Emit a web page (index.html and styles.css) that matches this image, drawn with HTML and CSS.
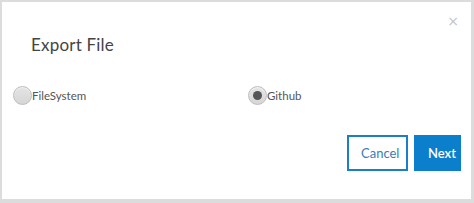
FILE: index.html
```html
<!DOCTYPE html>
<html lang="en">
<head>
    <meta charset="UTF-8">
    <title>Export File</title>
    <link rel="stylesheet" href="styles.css">
</head>
<body>
    <div class="modal">
        <div class="modal-header">
            <h3 class="modal-title">Export File</h3>
            <span class="close">&times;</span>
        </div>
        <div class="options">
            <label class="option">
                <span class="radio"></span>FileSystem
            </label>
            <label class="option">
                <span class="radio checked"></span>Github
            </label>
        </div>
        <div class="modal-footer">
            <button class="btn btn-cancel">Cancel</button>
            <button class="btn btn-next">Next</button>
        </div>
    </div>
</body>
</html>
```

FILE: styles.css
```css
body {
    margin: 0;
    padding: 2px 3px 4px 2px;
    background-color: #dcdcdc;
    font-family: 'Source Sans Pro', Lato, 'Open Sans', sans-serif;
}
.modal {
    background-color: #fff;
    height: 197px;
    box-sizing: border-box;
    position: relative;
}
.modal-header {
    padding: 32px 0 0 29px;
    height: 74px;
    box-sizing: border-box;
}
.modal-title {
    margin: 0;
    font-size: 17px;
    font-weight: normal;
    color: #444;
    letter-spacing: 0.2px;
}
.close {
    position: absolute;
    top: 11px;
    right: 12px;
    color: #c4c4c4;
    font-size: 14px;
    font-family: 'DejaVu Sans', sans-serif;
}
.options {
    display: grid;
    grid-template-columns: 235px 1fr;
    padding-left: 11px;
    padding-top: 10px;
}
.option {
    display: flex;
    align-items: center;
    font-size: 11.5px;
    color: #555;
}
.radio {
    width: 17px;
    height: 17px;
    border-radius: 50%;
    border: 1px solid #bdbdbd;
    background: linear-gradient(#e4e4e4, #d6d6d6);
    box-shadow: inset 0 1px 1px rgba(255,255,255,0.6);
    display: inline-flex;
    align-items: center;
    justify-content: center;
}
.radio.checked::after {
    content: "";
    width: 9px;
    height: 9px;
    border-radius: 50%;
    background-color: #555;
}
.modal-footer {
    display: flex;
    justify-content: flex-end;
    gap: 6px;
    padding: 30px 10px 0 0;
}
.btn {
    height: 36px;
    font-family: inherit;
    font-size: 13px;
    padding: 0 12px;
    border-radius: 0;
    cursor: pointer;
}
.btn-cancel {
    width: 61px;
    background-color: #fff;
    border: 2px solid #1a7fc9;
    color: #3a7db5;
}
.btn-next {
    width: 47px;
    background-color: #0b7fcc;
    border: 2px solid #0b7fcc;
    color: #fff;
    font-weight: 600;
}
```
